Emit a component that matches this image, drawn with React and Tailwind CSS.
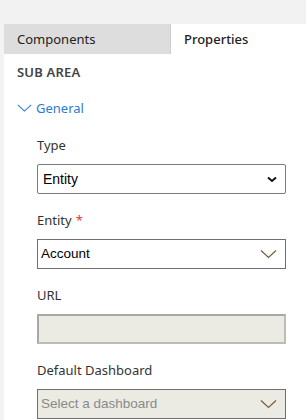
import React from "react";

function ThinChevron({ className, width = 17 }) {
  return (
    <svg width={width} height="10" viewBox="0 0 17 10" className={className}>
      <path d="M1 1.5 L8.5 8.5 L16 1.5" fill="none" stroke="currentColor" strokeWidth="1.2" />
    </svg>
  );
}

function Field({ label, required, children, className }) {
  return (
    <div className={className}>
      <div className="h-[20px] leading-[20px] text-[13px] text-[#333]">
        {label}
        {required && <span className="text-[#e0383e] ml-[4px]">*</span>}
      </div>
      <div className="mt-[9px]">{children}</div>
    </div>
  );
}

export default function App() {
  const arial = { fontFamily: "'Liberation Sans', Arial, sans-serif" };
  return (
    <div className="w-[306px] h-[420px] bg-[#f2f2f2] flex flex-col overflow-hidden" style={{ fontFamily: "'Noto Sans', sans-serif" }}>
      <div className="h-[24px] shrink-0" />
      <div className="flex flex-1 min-h-0">
        <div className="w-[4px] shrink-0 bg-[#f3f3f3]" />
        <div className="flex-1 bg-white flex flex-col">
          <div className="flex h-[30px] shrink-0">
            <div className="w-[167px] bg-[#dddddd] border-r border-[#cccccc] pl-[13px] text-[13px] leading-[30px] text-[#222]">
              Components
            </div>
            <div className="flex-1 bg-white pl-[13px] text-[13px] leading-[30px] text-[#222] font-medium">
              Properties
            </div>
          </div>

          <div className="pl-[13px] pt-[8px] h-[20px] box-content text-[13px] leading-[20px] font-semibold text-[#444] tracking-[0.2px]">
            SUB AREA
          </div>

          <div className="flex items-center pl-[13px] mt-[16px] h-[20px] text-[#2b7bd0]">
            <ThinChevron className="mr-[4px]" width={15} />
            <span className="text-[13px] leading-[20px]">General</span>
          </div>

          <div className="pl-[33px] pr-[20px]">
            <Field label="Type" className="mt-[17px]">
              <div className="h-[30px] border border-[#7a7a7a] rounded-[2px] flex items-center justify-between pl-[5px] pr-[8px] text-[14px] text-black" style={arial}>
                <span>Entity</span>
                <svg width="10" height="7" viewBox="0 0 10 7">
                  <path d="M1 1.5 L5 5 L9 1.5" fill="none" stroke="#111" strokeWidth="2" />
                </svg>
              </div>
            </Field>

            <Field label="Entity" required className="mt-[16px]">
              <div className="h-[30px] border border-[#6f6f6f] flex items-center justify-between pl-[3px] pr-[8px] text-[13.5px] text-black" style={arial}>
                <span>Account</span>
                <ThinChevron className="text-[#7a5a3a]" />
              </div>
            </Field>

            <Field label="URL" className="mt-[16px]">
              <div className="h-[30px] bg-[#ebeae3] border-2 border-[#bdbdb6] border-t-[#a9a9a3] border-l-[#a9a9a3]" />
            </Field>

            <Field label="Default Dashboard" className="mt-[16px]">
              <div className="h-[30px] bg-[#ebeae3] border border-[#6f6f6f] flex items-center justify-between pl-[3px] pr-[8px] text-[13.5px] text-[#8a8a8a]" style={arial}>
                <span>Select a dashboard</span>
                <ThinChevron className="text-[#7a5a3a]" />
              </div>
            </Field>
          </div>
        </div>
      </div>
    </div>
  );
}
